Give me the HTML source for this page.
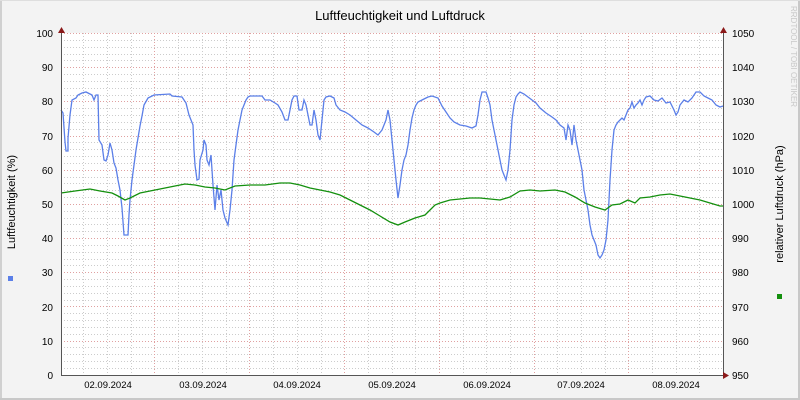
<!DOCTYPE html>
<html><head><meta charset="utf-8"><style>
html,body{margin:0;padding:0;}
body{width:800px;height:400px;overflow:hidden;background:#f3f3f3;}
svg{display:block;font-family:"Liberation Sans","DejaVu Sans",sans-serif;}
</style></head><body>
<svg width="800" height="400" viewBox="0 0 800 400" xmlns="http://www.w3.org/2000/svg">
<rect x="0" y="0" width="800" height="400" fill="#f3f3f3"/>
<rect x="0" y="0" width="2" height="400" fill="#d0d0d0"/>
<rect x="798" y="0" width="2" height="400" fill="#c8c8c8"/>
<rect x="0" y="398" width="800" height="2" fill="#c8c8c8"/>
<rect x="0" y="0" width="800" height="1" fill="#dedede"/>
<rect x="61" y="33" width="662" height="342" fill="#ffffff"/>
<g stroke="#cccccc" stroke-width="1" stroke-dasharray="1,2" fill="none">
<path d="M61 40.5H723M61 47.5H723M61 54.5H723M61 60.5H723M61 74.5H723M61 81.5H723M61 88.5H723M61 95.5H723M61 108.5H723M61 115.5H723M61 122.5H723M61 129.5H723M61 142.5H723M61 149.5H723M61 156.5H723M61 163.5H723M61 177.5H723M61 183.5H723M61 190.5H723M61 197.5H723M61 211.5H723M61 218.5H723M61 224.5H723M61 231.5H723M61 245.5H723M61 252.5H723M61 259.5H723M61 265.5H723M61 279.5H723M61 286.5H723M61 293.5H723M61 300.5H723M61 313.5H723M61 320.5H723M61 327.5H723M61 334.5H723M61 347.5H723M61 354.5H723M61 361.5H723M61 368.5H723"/>
<path d="M83.5 33V375M107.5 33V375M131.5 33V375M178.5 33V375M202.5 33V375M226.5 33V375M273.5 33V375M297.5 33V375M321.5 33V375M368.5 33V375M392.5 33V375M415.5 33V375M463.5 33V375M486.5 33V375M510.5 33V375M557.5 33V375M581.5 33V375M605.5 33V375M652.5 33V375M676.5 33V375M699.5 33V375"/>
</g>
<g stroke="#e0a0a0" stroke-width="1" stroke-dasharray="1,2" fill="none">
<path d="M61 33.5H723M61 67.5H723M61 101.5H723M61 136.5H723M61 170.5H723M61 204.5H723M61 238.5H723M61 272.5H723M61 306.5H723M61 341.5H723"/>
<path d="M154.5 33V375M249.5 33V375M344.5 33V375M439.5 33V375M534.5 33V375M628.5 33V375"/>
</g>
<g fill="none" stroke-width="1.3">
<polyline stroke="#5b7fe8" points="61,110 63,113 65,142 66,151 68,151 68,138 70,115 72,100 76,98 78,95 82,93 86,92 88,93 92,95 94,100 96,95 98,95 99,140 102,145 104,160 106,161 108,155 110,143 112,150 114,163 116,168 118,180 120,190 122,208 124,235 128,235 129,215 130,200 132,180 134,165 136,150 138,138 140,126 142,116 144,105 148,98 154,95 170,94 172,96 182,97 186,103 189,115 193,125 194,150 195,165 197,180 199,179 200,160 203,150 204,140 206,145 207,160 209,165 211,155 213,185 215,210 217,185 219,200 221,190 223,210 225,218 228,225 230,210 232,190 234,160 236,145 238,130 240,120 242,110 244,105 246,100 248,97 250,96 262,96 265,100 270,100 275,103 278,105 282,112 285,120 288,120 290,110 292,100 294,96 297,96 299,110 302,110 304,100 306,105 308,115 310,125 312,125 314,110 316,120 318,135 320,140 322,120 324,100 326,97 330,96 334,98 336,105 340,110 345,112 350,115 356,120 362,125 368,128 374,132 378,135 382,130 386,120 388,110 390,120 392,140 394,160 396,180 398,198 400,185 402,170 404,160 406,155 408,145 410,130 412,118 414,110 416,105 418,102 422,100 428,97 432,96 438,98 442,106 446,112 450,118 454,122 460,125 466,126 472,128 476,126 478,115 480,100 482,92 486,92 488,98 490,105 492,120 494,130 496,140 498,150 500,160 502,170 504,175 506,180 508,170 510,150 512,120 514,105 516,97 518,94 520,92 524,94 528,97 532,100 536,103 540,108 546,113 552,117 556,120 560,125 564,128 566,140 568,125 570,130 572,145 574,125 576,140 578,150 580,160 582,170 584,190 586,200 588,210 590,225 592,235 594,240 596,245 598,255 600,258 602,255 604,250 606,240 608,220 610,180 612,150 614,130 616,125 618,122 620,120 622,118 624,120 626,115 628,110 630,108 632,102 634,108 636,105 638,103 640,100 642,105 644,100 646,97 650,96 654,100 658,101 662,98 666,103 670,102 674,110 676,115 678,112 680,105 684,100 688,102 692,98 696,92 700,92 704,96 708,98 712,100 716,105 720,107 723,106"/>
<polyline stroke="#14900e" points="61,193 75,191 90,189 100,191 112,193 118,196 125,200 130,198 140,193 160,189 175,186 185,184 195,185 205,187 215,188 225,190 235,186 250,185 265,185 280,183 290,183 300,185 310,188 320,190 330,192 340,195 350,200 360,205 370,210 380,216 390,222 398,225 405,222 415,218 425,215 435,205 440,203 450,200 460,199 470,198 480,198 490,199 500,200 510,197 520,191 530,190 540,191 555,190 565,192 575,197 585,203 595,207 605,210 612,205 620,204 628,200 635,203 640,198 650,197 660,195 670,194 680,196 690,198 700,200 710,203 720,206 723,206"/>
</g>
<path d="M61.5 28V375.5H728M723.5 30V375.5" stroke="#555" stroke-width="1" fill="none"/>
<path d="M58 33L61.5 27L65 33Z M720 33L723.5 27L727 33Z M723 372L729 375.5L723 379Z" fill="#8b1a1a"/>
<g font-size="10" fill="#000" text-anchor="end">
<text x="53" y="37">100</text><text x="53" y="71">90</text><text x="53" y="105">80</text><text x="53" y="140">70</text><text x="53" y="174">60</text><text x="53" y="208">50</text><text x="53" y="242">40</text><text x="53" y="276">30</text><text x="53" y="311">20</text><text x="53" y="345">10</text><text x="53" y="379">0</text>
</g>
<g font-size="10" fill="#000" text-anchor="start">
<text x="732" y="37">1050</text><text x="732" y="71">1040</text><text x="732" y="105">1030</text><text x="732" y="140">1020</text><text x="732" y="174">1010</text><text x="732" y="208">1000</text><text x="732" y="242">990</text><text x="732" y="276">980</text><text x="732" y="311">970</text><text x="732" y="345">960</text><text x="732" y="379">950</text>
</g>
<g font-size="9.5" fill="#000" text-anchor="middle">
<text x="108" y="388">02.09.2024</text><text x="203" y="388">03.09.2024</text><text x="297" y="388">04.09.2024</text><text x="392" y="388">05.09.2024</text><text x="487" y="388">06.09.2024</text><text x="581" y="388">07.09.2024</text><text x="676" y="388">08.09.2024</text>
</g>
<text x="400" y="20" font-size="13" text-anchor="middle" fill="#000">Luftfeuchtigkeit und Luftdruck</text>
<text transform="translate(15,202) rotate(-90)" font-size="11" text-anchor="middle" fill="#000">Luftfeuchtigkeit (%)</text>
<text transform="translate(783,204) rotate(-90)" font-size="11" text-anchor="middle" fill="#000">relativer Luftdruck (hPa)</text>
<text transform="translate(791,6) rotate(90)" font-size="8" text-anchor="start" fill="#c8c8c8">RRDTOOL / TOBI OETIKER</text>
<rect x="8" y="276" width="5" height="5" fill="#5b7fe8"/>
<rect x="777" y="294" width="5" height="5" fill="#14900e"/>
</svg>
</body></html>
